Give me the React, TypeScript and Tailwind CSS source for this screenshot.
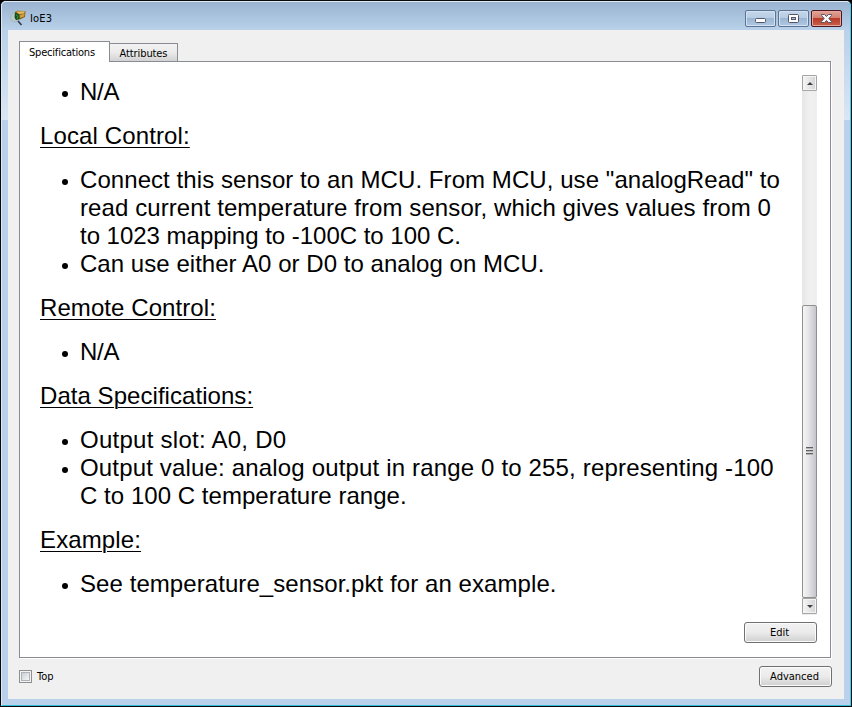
import React from "react";

const ui = "font-['DejaVu_Sans_Condensed','DejaVu_Sans',sans-serif] text-[11px] leading-[14px] text-black whitespace-nowrap";

type Line = { text: string; className?: string };

function Heading({ text, className = "" }: Line) {
  return (
    <h2 className="h-7">
      <span className={"underline decoration-1 underline-offset-[3px] " + className}>{text}</span>
    </h2>
  );
}

function Item({ lines }: { lines: Line[] }) {
  return (
    <li className="flex">
      <span className="mt-[13px] ml-[22px] mr-[12px] size-[6px] shrink-0 rounded-full bg-black" />
      <div>
        {lines.map((l) => (
          <div key={l.text} className="h-7">
            <span className={l.className}>{l.text}</span>
          </div>
        ))}
      </div>
    </li>
  );
}

function Button({ children, className = "" }: { children: string; className?: string }) {
  return (
    <button
      className={
        "flex h-[21px] w-[73px] items-center justify-center rounded-[3px] border border-[#707070] bg-linear-to-b from-[#f2f2f2] from-0% via-[#ebebeb] via-50% to-[#cfcfcf] pt-px pr-[2px] shadow-[inset_0_0_0_1px_#fbfbfb] " +
        ui + " " + className
      }
    >
      {children}
    </button>
  );
}

function WindowButton({ kind }: { kind: "min" | "max" | "close" }) {
  const close = kind === "close";
  return (
    <button
      className={
        "h-[17px] w-[31px] rounded-[2px] border " +
        (close
          ? "border-[#4b1620] bg-[linear-gradient(#e2a398,#d27f70_48%,#b93b29_50%,#c9604a)] shadow-[inset_0_0_0_1px_#e5a79c]"
          : "border-[#5c7391] bg-[linear-gradient(#c4d6ea,#b7cce3_48%,#9bb6d3_50%,#b0c8e2)] shadow-[inset_0_0_0_1px_#d3e2f2]")
      }
    >
      <svg width="29" height="15" viewBox="0 0 29 15" className="block">
        {kind === "min" && <rect x="9.5" y="7.5" width="10" height="4" rx="1" fill="#fff" stroke="#535666" />}
        {kind === "max" && (
          <>
            <rect x="9.5" y="3.5" width="10" height="8" rx="1" fill="#fff" stroke="#535666" />
            <rect x="12.5" y="6.5" width="4" height="2" fill="#a9c0da" stroke="#535666" />
          </>
        )}
        {close && (
          <path d="M9.5 3.5h3l2 2 2-2h3v1l-2.7 3 2.7 3v1h-3l-2-2-2 2h-3v-1l2.7-3-2.7-3z" fill="#f7f7f7" stroke="#535666" />
        )}
      </svg>
    </button>
  );
}

function AppIcon() {
  return (
    <svg width="16" height="16" viewBox="0 0 16 16">
      <circle cx="5" cy="7.5" r="4.5" fill="#b9c8cc" stroke="#a3b1b8" strokeWidth=".8" />
      <path d="M5 2 7 .7 15.5 1 15 7l-5 2.5L5 9z" fill="#8a611b" />
      <path d="M6 1.5 15 1.3 13.8 3.4 9 4z" fill="#e2bd62" />
      <path d="M10 5 14.6 3.6 14 6.5 10 8z" fill="#cf9c3c" />
      <path d="M5 2.5 9 4.5 9.5 9 6 10.2 4.5 7z" fill="#124f1e" />
      <path d="m6 5 2 1-1 3" stroke="#2f9939" fill="none" />
      <path d="m8 11 3.5 4" stroke="#333a40" strokeWidth="1.7" />
    </svg>
  );
}

function ArrowButton({ down = false }: { down?: boolean }) {
  return (
    <div className="flex h-4 w-[15px] shrink-0 items-center justify-center rounded-[1px] border border-[#a5a5a5] bg-linear-to-r from-[#f5f5f5] via-[#e6e6e8] to-[#d2d2d4] shadow-[inset_0_0_0_1px_#f4f4f4]">
      <svg width="6" height="3" viewBox="0 0 6 3" className={down ? "rotate-180" : ""}>
        <path d="M0 3 3 0 6 3z" fill="#404040" />
      </svg>
    </div>
  );
}

function ScrollBar() {
  return (
    <div className="mt-[13px] flex h-[540px] w-[15px] flex-col bg-linear-to-r from-[#e6e6e6] via-[#f0f0f0] to-[#eeeeee]">
      <ArrowButton />
      <div className="h-[214px] shrink-0" />
      <div className="flex h-[293px] shrink-0 flex-col items-center justify-center gap-px rounded-[2px] border border-[#909090] bg-linear-to-r from-[#f5f5f5] from-0% via-[#e4e4e7] via-45% to-[#c4c4ca] pr-px pb-px">
        {[0, 1, 2].map((i) => (
          <div key={i} className="h-[2px] w-[7px] border-t border-[#606060] bg-[#b5b5b5]" />
        ))}
      </div>
      <ArrowButton down />
    </div>
  );
}

export default function App() {
  return (
    <div className="h-[707px] w-[852px] overflow-hidden bg-black">
      <div className="flex h-[707px] w-[852px] flex-col rounded-t-[6px] border border-[#08090b] bg-[#b9d1ea]">
        <div className="flex h-[705px] flex-col rounded-t-[5px] border border-t-[#dfeaf5] border-r-[#31d3f5] border-b-[#31bdd8] border-l-[#d9e9f7] bg-linear-to-b from-[#99b4d1] from-0% to-[#b9d1ea] to-[28px]">
          <header className="flex h-7 shrink-0 pl-2">
            <div className="mt-[8px]"><AppIcon /></div>
            <span className={"ml-[4px] mt-[10px] tracking-[0.2px] " + ui}>IoE3</span>
            <div className="ml-auto mr-2 mt-2 flex gap-[2px]">
              <WindowButton kind="min" />
              <WindowButton kind="max" />
              <WindowButton kind="close" />
            </div>
          </header>
          <div className="flex">
            <div className="h-[90px] w-[6px] bg-linear-to-b from-[#b9d1ea] to-[#d9e6f4]" />
            <main className="h-[669px] w-[836px] bg-[#f0f0f0] pl-[11px] pt-[11px]">
              <nav className="flex h-5 items-end">
                <div className={"relative z-10 -mb-px flex h-[21px] w-[91px] shrink-0 items-start border border-b-0 border-[#898c95] bg-white pt-[4px] pl-[9px] tracking-[-0.2px] " + ui}>
                  <span>Specifications</span>
                </div>
                <div className={"-ml-px flex h-[18px] w-[69px] justify-center border border-b-0 border-[#898c95] bg-linear-to-b from-[#f2f2f2] via-[#ebebeb] to-[#d2d2d2] pt-[3px] tracking-[-0.1px] " + ui}>
                  <span>Attributes</span>
                </div>
              </nav>
              <section className="h-[597px] w-[812px] border border-[#898c95] bg-white shadow-[1px_1px_0_#fff]">
                <div className="flex h-[553px] justify-between pr-[13px]">
                  <article className="ml-5 mt-4 flex w-[745px] flex-col gap-4 whitespace-nowrap font-['Liberation_Sans',Arial,sans-serif] text-[24px] leading-7 text-black">
                    <ul><Item lines={[{ text: "N/A", className: "tracking-[-0.3px]" }]} /></ul>
                    <Heading text="Local Control:" className="tracking-[0.12px]" />
                    <ul>
                      <Item
                        lines={[
                          { text: 'Connect this sensor to an MCU. From MCU, use "analogRead" to', className: "tracking-[0.066px]" },
                          { text: "read current temperature from sensor, which gives values from 0", className: "tracking-[0.085px]" },
                          { text: "to 1023 mapping to -100C to 100 C.", className: "tracking-[-0.02px]" },
                        ]}
                      />
                      <Item lines={[{ text: "Can use either A0 or D0 to analog on MCU.", className: "tracking-[0.04px]" }]} />
                    </ul>
                    <Heading text="Remote Control:" className="tracking-[0.08px]" />
                    <ul><Item lines={[{ text: "N/A", className: "tracking-[-0.3px]" }]} /></ul>
                    <Heading text="Data Specifications:" className="tracking-[0.05px]" />
                    <ul>
                      <Item lines={[{ text: "Output slot: A0, D0", className: "tracking-[0.26px]" }]} />
                      <Item
                        lines={[
                          { text: "Output value: analog output in range 0 to 255, representing -100", className: "tracking-[0.165px]" },
                          { text: "C to 100 C temperature range.", className: "tracking-[0.04px]" },
                        ]}
                      />
                    </ul>
                    <Heading text="Example:" className="tracking-[0.12px]" />
                    <ul><Item lines={[{ text: "See temperature_sensor.pkt for an example.", className: "tracking-[0.07px]" }]} /></ul>
                  </article>
                  <ScrollBar />
                </div>
                <div className="mt-[7px] flex justify-end pr-[13px]"><Button>Edit</Button></div>
              </section>
              <footer className="mt-2 flex w-[813px] items-center justify-between">
                <label className="flex items-center gap-[5px]">
                  <span className="flex size-[13px] items-center justify-center border border-[#8e8f8f] bg-[#f4f4f4]">
                    <span className="size-[9px] border border-[#aeb3b9] bg-linear-to-br from-[#cbcfd5] to-[#f6f6f6]" />
                  </span>
                  <span className={"pt-px " + ui}>Top</span>
                </label>
                <Button>Advanced</Button>
              </footer>
            </main>
            <div className="h-[90px] w-[6px] bg-linear-to-b from-[#b9d1ea] to-[#d9e6f4]" />
          </div>
        </div>
      </div>
    </div>
  );
}
